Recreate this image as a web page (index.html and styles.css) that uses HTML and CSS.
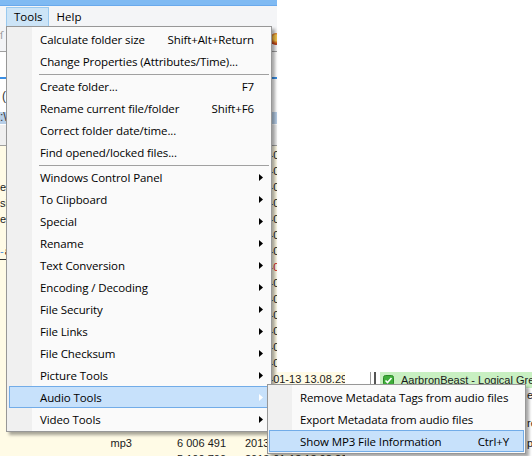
FILE: index.html
```html
<!DOCTYPE html>
<html>
<head>
<meta charset="utf-8">
<link rel="stylesheet" href="styles.css">
</head>
<body>
<div class="screen">
  <div class="app">
    <div class="titlebar"></div>
    <div class="menubar">
      <span class="mb-item active">Tools</span>
      <span class="mb-item">Help</span>
    </div>
    <div class="toolbar">
      <span class="tb-glyph">ſ</span>
      <span class="tb-icon"></span>
    </div>
    <div class="search"></div>
    <div class="pathbox">
      <div class="path-line">(</div>
      <div class="path-sel">:\</div>
    </div>
    <div class="header"></div>
    <div class="list">
      <div class="row"><span class="c1"></span><span class="c2">mp3</span><span class="c3">4 512 003</span><span class="c4">2013-01-13 13.08.29</span><span class="c5"></span><span class="c6"></span></div>
      <div class="row"><span class="c1"></span><span class="c2">mp3</span><span class="c3">5 021 118</span><span class="c4">2013-01-13 13.08.29</span><span class="c5"></span><span class="c6"></span></div>
      <div class="row"><span class="c1">e</span><span class="c2">mp3</span><span class="c3">3 998 510</span><span class="c4">2013-01-13 13.08.29</span><span class="c5"></span><span class="c6"></span></div>
      <div class="row"><span class="c1">si</span><span class="c2">mp3</span><span class="c3">6 204 771</span><span class="c4">2013-01-13 13.08.29</span><span class="c5"></span><span class="c6"></span></div>
      <div class="row"><span class="c1">e</span><span class="c2">mp3</span><span class="c3">5 732 040</span><span class="c4">2013-01-13 13.08.29</span><span class="c5"></span><span class="c6"></span></div>
      <div class="row"><span class="c1"></span><span class="c2">mp3</span><span class="c3">4 880 312</span><span class="c4">2013-01-13 13.08.29</span><span class="c5"></span><span class="c6"></span></div>
      <div class="row"><span class="c1 lined"><span class="dash">-</span>a</span><span class="c2">mp3</span><span class="c3">5 417 906</span><span class="c4">2013-01-13 13.08.29</span><span class="c5"></span><span class="c6"></span></div>
      <div class="row"><span class="c1"></span><span class="c2">mp3</span><span class="c3">6 118 224</span><span class="c4 red">2013-01-13 13.08.29</span><span class="c5"></span><span class="c6"></span></div>
      <div class="row"><span class="c1"></span><span class="c2">mp3</span><span class="c3">5 302 657</span><span class="c4">2013-01-13 13.08.29</span><span class="c5"></span><span class="c6"></span></div>
      <div class="row"><span class="c1"></span><span class="c2">mp3</span><span class="c3">4 761 099</span><span class="c4">2013-01-13 13.08.29</span><span class="c5"></span><span class="c6"></span></div>
      <div class="row"><span class="c1"></span><span class="c2">mp3</span><span class="c3">5 890 431</span><span class="c4">2013-01-13 13.08.29</span><span class="c5"></span><span class="c6"></span></div>
      <div class="row"><span class="c1"></span><span class="c2">mp3</span><span class="c3">6 045 870</span><span class="c4">2013-01-13 13.08.29</span><span class="c5"></span><span class="c6"></span></div>
      <div class="row"><span class="c1"></span><span class="c2">mp3</span><span class="c3">5 566 012</span><span class="c4">2013-01-13 13.08.29</span><span class="c5"></span><span class="c6"></span></div>
      <div class="row"><span class="c1"></span><span class="c2">mp3</span><span class="c3">4 973 385</span><span class="c4">2013-01-13 13.08.29</span><span class="c5"></span><span class="c6"></span></div>
      <div class="row"><span class="c1"></span><span class="c2">mp3</span><span class="c3">5 144 268</span><span class="c4">2013-01-13 13.08.29</span><span class="c5"><span class="bar"></span><span class="bar dark"></span></span><span class="c6 green"><svg class="chk" width="11" height="11" viewBox="0 0 11 11"><rect x="0.5" y="0.5" width="10" height="10" rx="2" fill="#3fae3a" stroke="#2b8a27"/><path d="M2.5 5.5L4.5 7.5L8.5 3" fill="none" stroke="#fff" stroke-width="1.6"/></svg><span class="nm">AarbronBeast - Logical Green</span></span></div>
      <div class="row"><span class="c1"></span><span class="c2"></span><span class="c3"></span><span class="c4"></span><span class="c5"></span><span class="c6 tail"><span class="frag">e</span></span></div>
      <div class="row"><span class="c1"></span><span class="c2"></span><span class="c3"></span><span class="c4"></span><span class="c5"></span><span class="c6 tail"></span></div>
      <div class="row"><span class="c1"></span><span class="c2"></span><span class="c3"></span><span class="c4"></span><span class="c5"></span><span class="c6 tail"><span class="frag up">re</span></span></div>
      <div class="row"><span class="c1"></span><span class="c2">mp3</span><span class="c3">6 006 491</span><span class="c4">2013-01-13 13.08.29</span><span class="c5"></span><span class="c6 tail"><span class="frag">p</span></span></div>
      <div class="row"><span class="c1"></span><span class="c2">ogg</span><span class="c3">5 100 700</span><span class="c4">2013-01-13 13.08.29</span><span class="c5"></span><span class="c6 tail"></span></div>
    </div>
  </div>

  <div class="blank"></div>

  <div class="menu">
    <div class="mi"><span class="lbl">Calculate folder size</span><span class="sc">Shift+Alt+Return</span><span class="ar"></span></div>
    <div class="mi"><span class="lbl">Change Properties (Attributes/Time)...</span><span class="ar"></span></div>
    <div class="sep"></div>
    <div class="mi"><span class="lbl">Create folder...</span><span class="sc">F7</span><span class="ar"></span></div>
    <div class="mi"><span class="lbl">Rename current file/folder</span><span class="sc">Shift+F6</span><span class="ar"></span></div>
    <div class="mi"><span class="lbl">Correct folder date/time...</span><span class="ar"></span></div>
    <div class="mi"><span class="lbl">Find opened/locked files...</span><span class="ar"></span></div>
    <div class="sep"></div>
    <div class="mi"><span class="lbl">Windows Control Panel</span><span class="ar"><svg width="4" height="7" viewBox="0 0 4 7"><path d="M0 0L4 3.5L0 7z"/></svg></span></div>
    <div class="mi"><span class="lbl">To Clipboard</span><span class="ar"><svg width="4" height="7" viewBox="0 0 4 7"><path d="M0 0L4 3.5L0 7z"/></svg></span></div>
    <div class="mi"><span class="lbl">Special</span><span class="ar"><svg width="4" height="7" viewBox="0 0 4 7"><path d="M0 0L4 3.5L0 7z"/></svg></span></div>
    <div class="mi"><span class="lbl">Rename</span><span class="ar"><svg width="4" height="7" viewBox="0 0 4 7"><path d="M0 0L4 3.5L0 7z"/></svg></span></div>
    <div class="mi"><span class="lbl">Text Conversion</span><span class="ar"><svg width="4" height="7" viewBox="0 0 4 7"><path d="M0 0L4 3.5L0 7z"/></svg></span></div>
    <div class="mi"><span class="lbl">Encoding / Decoding</span><span class="ar"><svg width="4" height="7" viewBox="0 0 4 7"><path d="M0 0L4 3.5L0 7z"/></svg></span></div>
    <div class="mi"><span class="lbl">File Security</span><span class="ar"><svg width="4" height="7" viewBox="0 0 4 7"><path d="M0 0L4 3.5L0 7z"/></svg></span></div>
    <div class="mi"><span class="lbl">File Links</span><span class="ar"><svg width="4" height="7" viewBox="0 0 4 7"><path d="M0 0L4 3.5L0 7z"/></svg></span></div>
    <div class="mi"><span class="lbl">File Checksum</span><span class="ar"><svg width="4" height="7" viewBox="0 0 4 7"><path d="M0 0L4 3.5L0 7z"/></svg></span></div>
    <div class="mi"><span class="lbl">Picture Tools</span><span class="ar"><svg width="4" height="7" viewBox="0 0 4 7"><path d="M0 0L4 3.5L0 7z"/></svg></span></div>
    <div class="mi hl"><span class="lbl">Audio Tools</span><span class="ar"><svg width="4" height="7" viewBox="0 0 4 7"><path d="M0 0L4 3.5L0 7z" fill="#fff"/></svg></span></div>
    <div class="mi"><span class="lbl">Video Tools</span><span class="ar"><svg width="4" height="7" viewBox="0 0 4 7"><path d="M0 0L4 3.5L0 7z"/></svg></span></div>
  </div>

  <div class="submenu">
    <div class="mi"><span class="lbl">Remove Metadata Tags from audio files</span><span class="ar"></span></div>
    <div class="mi"><span class="lbl">Export Metadata from audio files</span><span class="ar"></span></div>
    <div class="mi hl"><span class="lbl">Show MP3 File Information</span><span class="sc">Ctrl+Y</span><span class="ar"></span></div>
  </div>
</div>
</body>
</html>
```

FILE: styles.css
```css
* { box-sizing: border-box; }
html, body { margin: 0; padding: 0; background: #fff; }

.screen {
  position: relative;
  width: 532px;
  height: 456px;
  overflow: hidden;
  font-family: "Open Sans", "Noto Sans", sans-serif;
  color: #000;
}

/* background application */
.app {
  width: 532px;
  height: 456px;
  display: flex;
  flex-direction: column;
  background: #fff;
  overflow: hidden;
}
.app > * { flex: none; }
.titlebar {
  height: 6px;
  background: #7fbaf3;
  border-bottom: 1px solid #69a9ec;
}
.menubar {
  height: 21px;
  background: #f4f5f7;
  display: flex;
  align-items: flex-start;
  padding-left: 6px;
  font-size: 11.5px;
}
.mb-item {
  height: 20px;
  margin-top: 1px;
  padding: 0 5px 0 7px;
  line-height: 18px;
  border: 1px solid transparent;
}
.mb-item.active {
  background: #cce4f7;
  border-color: #99c9ef;
}
.toolbar {
  height: 25px;
  background: #f3f4f6;
  border-bottom: 1px solid #a0a0a0;
  display: flex;
  align-items: center;
}
.tb-glyph {
  width: 8px;
  font-family: "DejaVu Sans", sans-serif;
  font-size: 10px;
  color: #999;
  margin-top: -8px;
}
.tb-icon {
  width: 12px;
  height: 12px;
  margin-left: 262px;
  border-radius: 50%;
  background: radial-gradient(circle at 50% 40%, #f5c34a 0 30%, #d0601c 55%, #a61d10 80%);
}
.search {
  height: 27px;
  background: #fff;
  border-bottom: 2px solid #3b8fe4;
}
.pathbox {
  height: 46px;
  background: #fff;
  display: flex;
  flex-direction: column;
  justify-content: flex-end;
  font-family: "Liberation Sans", sans-serif;
  font-size: 12px;
}
.path-line {
  height: 23px;
  padding-left: 2px;
  color: #333;
  line-height: 14px;
}
.path-sel {
  height: 12px;
  background: #b8cfe8;
  line-height: 11px;
  color: #333;
  margin-bottom: 1px;
}
.header {
  height: 21px;
  background: #f0f0f0;
  border-bottom: 1px solid #a0a0a0;
}
.list {
  padding-top: 2px;
  background: #fffbe6;
  font-family: "Liberation Sans", sans-serif;
  font-size: 11px;
  color: #1a1a1a;
}
.row {
  height: 16px;
  display: grid;
  grid-template-columns: 100px 32px 94px 119px 35px 152px;
  line-height: 15px;
  white-space: nowrap;
}
.row > span { overflow: hidden; }
.c1 { padding-left: 0; }
.c1.lined { border-bottom: 1px solid #333; }
.dash { color: #4a90d9; margin-right: 1px; }
.c2, .c3 { text-align: right; }
.c4 { padding-left: 19px; }
.c4.red { color: #d42020; }
.c5 { background: #fff; display: flex; padding-left: 25px; gap: 2px; }
.bar { width: 1px; height: 16px; background: #9a9a9a; }
.bar.dark { width: 2px; background: #555; margin-left: 1px; }
.c6 { background: #fff; }
.c6.green {
  background: #c9f0c2;
  display: flex;
  align-items: center;
  padding-left: 3px;
}
.chk { flex: none; }
.nm { margin-left: 7px; }
.c6.tail { display: flex; justify-content: flex-end; }
.frag { width: 5px; overflow: visible; }
.frag.up { margin-top: -4px; }

.blank {
  position: absolute;
  left: 277px;
  top: 0;
  width: 255px;
  height: 372px;
  background: #fff;
}

/* menus */
.menu, .submenu {
  position: absolute;
  border: 1px solid #979797;
  box-shadow: 3px 3px 3px rgba(0, 0, 0, 0.35);
  font-size: 11.5px;
  letter-spacing: -0.1px;
}
.menu {
  left: 6px;
  top: 26px;
  width: 266px;
  padding: 1px 2px 1px 2px;
  background: linear-gradient(to right, #f0f0f0 25px, #fafafa 25px);
}
.submenu {
  left: 267px;
  top: 384px;
  width: 259px;
  padding: 1px;
  background: linear-gradient(to right, #f0f0f0 24px, #fafafa 24px);
}
.mi {
  height: 22px;
  display: flex;
  align-items: center;
  padding-left: 30px;
  border: 1px solid transparent;
  white-space: nowrap;
}
.mi.hl {
  background: #c7e1fb;
  border-color: #72ace8;
}
.lbl { flex: 1; }
.ar {
  width: 14px;
  flex: none;
  display: flex;
  align-items: center;
  padding-left: 5px;
}
.ar svg { display: block; }
.sep {
  height: 1px;
  margin: 2px 0 0 30px;
  background: #a0a0a0;
}
```
